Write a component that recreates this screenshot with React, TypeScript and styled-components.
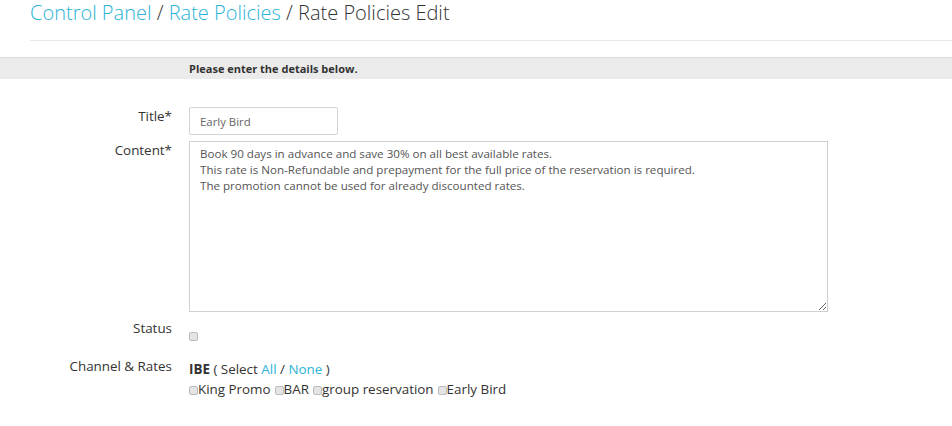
import styled, { createGlobalStyle } from "styled-components";

const GlobalStyle = createGlobalStyle`
  body {
    margin: 0;
    background: #fff;
    font-family: "Open Sans", "Liberation Sans", sans-serif;
    color: #333;
  }
`;

const Header = styled.div`
  padding: 0 0 0 30px;
`;

const Breadcrumb = styled.h1`
  margin: 0;
  height: 40px;
  font-size: 20px;
  line-height: 26px;
  font-weight: 300;
  color: #333;
  border-bottom: 1px solid #e8e8e8;
`;

const Crumb = styled.a`
  color: #2bb3d6;
  text-decoration: none;
`;

const Notice = styled.div`
  margin-top: 16px;
  height: 21px;
  background: #ebebeb;
  border-top: 1px solid #dcdcdc;
  padding-left: 189px;
  font-size: 11px;
  font-weight: 700;
  line-height: 21px;
  color: #333;
`;

const Form = styled.div`
  display: grid;
  grid-template-columns: 172px 638px;
  column-gap: 17px;
  row-gap: 6px;
  padding-top: 28px;
`;

const Label = styled.label<{ $top?: number }>`
  text-align: right;
  font-size: 13.4px;
  line-height: 18px;
  color: #333;
  padding-top: ${(p) => p.$top ?? 0}px;
`;

const TextInput = styled.input`
  box-sizing: border-box;
  display: block;
  width: 149px;
  height: 28px;
  border: 1px solid #d4d4d4;
  border-radius: 2px;
  padding: 0 10px;
  font-family: inherit;
  font-size: 11.4px;
  color: #666;
  outline: none;
`;

const TextArea = styled.textarea`
  box-sizing: border-box;
  width: 639px;
  height: 171px;
  border: 1px solid #d0d0d0;
  border-radius: 0;
  padding: 4px 10px;
  font-family: inherit;
  font-size: 11.6px;
  line-height: 16px;
  color: #555;
  resize: vertical;
  outline: none;
  margin: 0;
  display: block;
`;

const Box = styled.span`
  display: inline-block;
  box-sizing: border-box;
  width: 9px;
  height: 9px;
  border: 1px solid #bcbcbc;
  border-radius: 2px;
  background: #e4e4e4;
  vertical-align: -1px;
`;

const StatusField = styled.div`
  box-sizing: border-box;
  padding-top: 14px;
  height: 33px;
  line-height: 0;
`;

const Channel = styled.div`
  font-size: 13.4px;
  line-height: 20px;
  color: #333;
  padding-top: 2px;
`;

const Strong = styled.b`
  font-weight: 700;
`;

const Link = styled.a`
  color: #2bb3d6;
  text-decoration: none;
`;

const Rate = styled.span`
  margin-right: 4px;
`;

const content = `Book 90 days in advance and save 30% on all best available rates.
This rate is Non-Refundable and prepayment for the full price of the reservation is required.
The promotion cannot be used for already discounted rates.`;

const rates = ["King Promo", "BAR", "group reservation", "Early Bird"];

export default function App() {
  return (
    <>
      <GlobalStyle />
      <Header>
        <Breadcrumb>
          <Crumb>Control Panel</Crumb> / <Crumb>Rate Policies</Crumb> / Rate Policies Edit
        </Breadcrumb>
      </Header>
      <Notice>Please enter the details below.</Notice>
      <Form>
        <Label>Title*</Label>
        <div>
          <TextInput defaultValue="Early Bird" />
        </div>
        <Label>Content*</Label>
        <div>
          <TextArea defaultValue={content} />
        </div>
        <Label $top={1}>Status</Label>
        <StatusField>
          <Box />
        </StatusField>
        <Label>Channel &amp; Rates</Label>
        <Channel>
          <div>
            <Strong>IBE</Strong> ( Select <Link>All</Link> / <Link>None</Link> )
          </div>
          <div>
            {rates.map((r) => (
              <Rate key={r}>
                <Box />
                {r}
              </Rate>
            ))}
          </div>
        </Channel>
      </Form>
    </>
  );
}
